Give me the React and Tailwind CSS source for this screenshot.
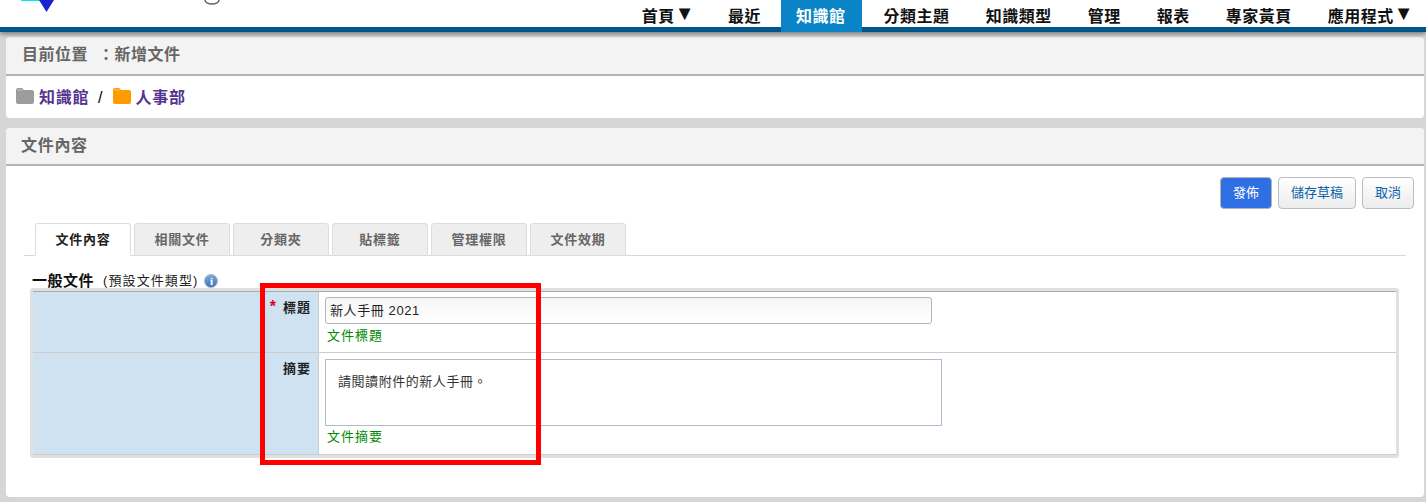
import React from 'react';

const navItems = [
  { label: '首頁', arrow: true, spacing: 'pl-[18px] pr-[15px] text-[#111]' },
  { label: '最近', spacing: 'px-[18px] text-[#111]' },
  { label: '知識館', spacing: 'ml-[2px] mr-[4px] bg-[#0a84c6] pl-[15px] pr-[16px] text-white' },
  { label: '分類主題', spacing: 'px-[18px] text-[#111]' },
  { label: '知識類型', spacing: 'px-[18px] text-[#111]' },
  { label: '管理', spacing: 'px-[18px] text-[#111]' },
  { label: '報表', spacing: 'px-[18px] text-[#111]' },
  { label: '專家黃頁', spacing: 'px-[18px] text-[#111]' },
  { label: '應用程式', arrow: true, spacing: 'pl-[18px] text-[#111]' },
];

const tabs = ['文件內容', '相關文件', '分類夾', '貼標籤', '管理權限', '文件效期'];

const Folder = ({ color }) => (
  <svg width="18" height="16" viewBox="0 0 18 16" className="-mt-[4px] shrink-0">
    <path d="M0 2A2 2 0 0 1 2 0h3.500a2 2 0 0 1 1.500.7L8 2h8a2 2 0 0 1 2 2v10a2 2 0 0 1-2 2H2a2 2 0 0 1-2-2z" fill={color} />
    <path d="M1 1.600h5.500l1 1H1z" fill="#fff" opacity="0.4" />
  </svg>
);

const App = () => {
  return (
    <div className="relative h-[502px] w-[1426px] overflow-hidden bg-[#d6d6d6] font-['Liberation_Sans','Noto_Sans_CJK_TC',sans-serif]">
      {/* header */}
      <div className="relative h-[32px] border-b-[5px] border-[#00558a] bg-white shadow-[0_2px_5px_rgba(0,0,0,0.45)]">
        <svg width="240" height="14" viewBox="0 0 240 14" className="absolute left-0 top-0">
          <rect x="21" y="0" width="19" height="1" fill="#00e5f0" />
          <path d="M39 0h15l-7.500 12z" fill="#1a22d0" />
          <path d="M205 0a7 4 0 0 0 14 0" fill="none" stroke="#666" strokeWidth="1.500" />
        </svg>
        <div className="absolute right-[12px] top-0 flex h-[32px] items-start">
          {navItems.map((item) => (
            <div
              key={item.label}
              className={`flex h-[32px] items-start pt-[7px] text-[16px] leading-[20px] font-bold tracking-[0.5px] ${item.spacing}`}
            >
              {item.label}
              {item.arrow && <span className="-mt-[4px] text-[20px] leading-[20px]">▼</span>}
            </div>
          ))}
        </div>
      </div>

      {/* current location */}
      <div className="ml-[6px] mr-[2px] mt-[5px] overflow-hidden rounded-[4px] bg-white">
        <div className="flex h-[39px] items-center border-b-2 border-[#b4b4b4] bg-[#f3f3f3] pl-[16px] pb-[2px] text-[16px] font-bold tracking-[0.5px] text-[#666]">
          目前位置 &nbsp;：新增文件
        </div>
        <div className="flex h-[42px] items-center pl-[10px] pt-[1px] text-[16px] font-bold text-[#56348f]">
          <Folder color="#9c9c9c" />
          <span className="ml-[5px] tracking-[0.7px]">知識館</span>
          <span className="ml-[9px] mr-[10px] font-normal text-black">/</span>
          <Folder color="#ff9a00" />
          <span className="ml-[5px] tracking-[0.7px]">人事部</span>
        </div>
      </div>

      {/* document panel */}
      <div className="ml-[6px] mr-[2px] mt-[10px] h-[369px] overflow-hidden rounded-[4px] bg-white">
        <div className="flex h-[38px] items-center border-b-2 border-[#b4b4b4] bg-[#f3f3f3] pl-[15px] pb-[1px] text-[16px] font-bold tracking-[0.7px] text-[#666]">
          文件內容
        </div>

        <div className="flex justify-end gap-[6px] pr-[10px] pt-[11px]">
          <button className="h-[32px] w-[52px] rounded-[4px] border border-[#b4b4b4] bg-[#2f6fe4] text-[13px] text-white">發佈</button>
          <button className="h-[32px] w-[78px] rounded-[4px] border border-[#bdbdbd] bg-gradient-to-b from-white to-[#ececec] text-[13px] text-[#0a64a8]">儲存草稿</button>
          <button className="h-[32px] w-[52px] rounded-[4px] border border-[#bdbdbd] bg-gradient-to-b from-white to-[#ececec] text-[13px] text-[#0a64a8]">取消</button>
        </div>

        <div className="ml-[18px] mr-[18px] mt-[14px] flex h-[33px] gap-[3px] border-b border-[#d8d8d8] pl-[11px]">
          {tabs.map((tab, index) => (
            <div
              key={tab}
              className={`flex h-[33px] w-[96px] items-center justify-center rounded-t-[3px] border border-[#dcdcdc] text-[13px] font-bold tracking-[0.75px] ${index === 0 ? 'border-b-white bg-white text-[#222]' : 'bg-[#eeeeee] text-[#666]'}`}
            >
              {tab}
            </div>
          ))}
        </div>

        <div className="ml-[26px] mt-[16px] flex h-[18px] items-center">
          <span className="text-[15px] font-bold tracking-[0.5px] text-[#111]">一般文件</span>
          <span className="ml-[9px] text-[13px] tracking-[1.1px] text-[#222]">(預設文件類型)</span>
          <span className="ml-[6px] flex h-[14px] w-[14px] items-center justify-center rounded-full border border-[#9db6d8] bg-gradient-to-b from-[#7fa8d8] to-[#3f74b8] font-['Liberation_Serif',serif] text-[11px] leading-none font-bold text-white">i</span>
        </div>

        {/* form table */}
        <div className="ml-[24px] mr-[25px] -mt-[2px] rounded-[3px] border-[3px] border-[#e0e0e0]">
          <div className="flex h-[62px] border-b border-t border-[#cccccc] border-t-[#aaaaaa]">
            <div className="flex w-[285px] justify-end bg-[#cfe2f1] pr-[7px] pt-[6px] text-[13px] font-bold tracking-[1px] text-[#222]">
              <span className="mr-[6px] text-[16px] leading-[18px] text-[#e0001a]">*</span>標題
            </div>
            <div className="flex-1 border-l border-[#cccccc] pl-[6px] pt-[5px]">
              <div className="flex h-[27px] w-[607px] items-center rounded-[3px] border border-[#b4b4b4] bg-gradient-to-b from-[#f6f6f6] to-white pl-[4px] text-[13px] tracking-[0.6px] text-[#222]">
                新人手冊 2021
              </div>
              <div className="mt-[3px] pl-[2px] text-[13px] leading-[18px] tracking-[1px] text-[#008a00]">文件標題</div>
            </div>
          </div>
          <div className="flex h-[102px] border-b border-[#cccccc]">
            <div className="flex w-[285px] justify-end bg-[#cfe2f1] pr-[7px] pt-[6px] text-[13px] font-bold tracking-[1px] text-[#222]">摘要</div>
            <div className="flex-1 border-l border-[#cccccc] pl-[6px] pt-[6px]">
              <div className="h-[67px] w-[617px] border border-[#b4b9cc] pl-[12px] pt-[13px] text-[13px] leading-[18px] tracking-[0.55px] text-[#333]">
                請閱讀附件的新人手冊。
              </div>
              <div className="mt-[2px] pl-[2px] text-[13px] leading-[18px] tracking-[1px] text-[#008a00]">文件摘要</div>
            </div>
          </div>
        </div>
      </div>

      {/* red annotation */}
      <div className="pointer-events-none absolute left-[260px] top-[283px] h-[182px] w-[281px] border-[5px] border-[#ff0000]" />
    </div>
  );
};

export default App;
